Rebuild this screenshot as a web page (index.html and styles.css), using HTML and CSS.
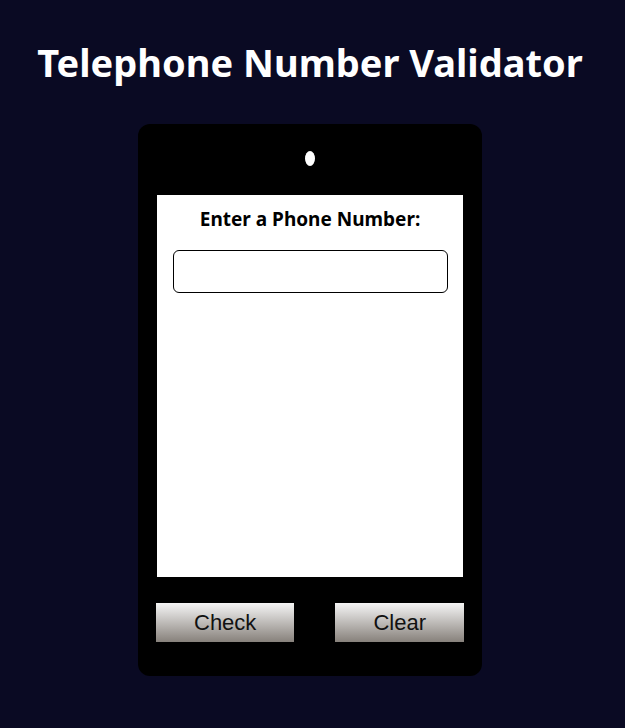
FILE: index.html
```html
<!DOCTYPE html>
<html lang="en">
<head>
    <meta charset="UTF-8">
    <meta name="viewport" content="width=device-width, initial-scale=1.0">
    <title>Telephone Number Validator</title>
    <link rel="stylesheet" href="styles.css">
</head>
<body>

<h1>Telephone Number Validator</h1>

<div class="phone">
    <div class="camera"></div>
    <div class="screen">
        <label for="user-input">Enter a Phone Number:</label>
        <input type="text" id="user-input" name="user-input">
        <div id="results-div"></div>
    </div>
    <div class="buttons">
        <button id="check-btn" class="btn">Check</button>
        <button id="clear-btn" class="btn">Clear</button>
    </div>
</div>

</body>
</html>
```

FILE: styles.css
```css
body {
    font-family: "Noto Sans", "Open Sans", sans-serif;
    background-color: #0a0a23;
    margin: 0;
    padding: 0;
    max-width: 620px;
}
h1 {
    color: white;
    text-align: center;
    font-size: 38px;
    margin: 36px 0 36px;
    line-height: 52px;
}
.phone {
    width: 344px;
    height: 552px;
    margin: 0 auto;
    background: black;
    border-radius: 12px;
    box-sizing: border-box;
    padding: 27px 19px 0;
    display: flex;
    flex-direction: column;
    align-items: center;
}
.camera {
    width: 10px;
    height: 15px;
    background: white;
    border-radius: 50%;
}
.screen {
    width: 306px;
    height: 382px;
    margin-top: 29px;
    background: white;
    display: flex;
    flex-direction: column;
    align-items: center;
    padding-top: 11px;
    box-sizing: border-box;
}
label {
    font-weight: bold;
    font-size: 19px;
    color: black;
}
input {
    width: 275px;
    height: 43px;
    margin-top: 18px;
    border: 1px solid black;
    border-radius: 6px;
    box-sizing: border-box;
    font-size: 18px;
}
.buttons {
    width: 308px;
    display: flex;
    justify-content: space-between;
    margin-top: 26px;
}
.btn {
    font-family: "Liberation Sans", Arial, sans-serif;
    font-size: 22px;
    color: #111;
    height: 39px;
    padding: 0 38px;
    border: none;
    background: linear-gradient(#f5f5f5, #87817b);
    cursor: pointer;
}
```
